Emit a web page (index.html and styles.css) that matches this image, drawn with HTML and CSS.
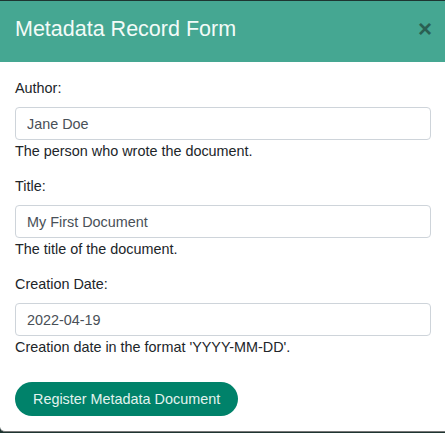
FILE: index.html
```html
<!DOCTYPE html>
<html>
<head>
<meta charset="utf-8">
<link rel="stylesheet" href="styles.css">
</head>
<body>
<div class="modal">
  <div class="modal-header">
    <h4 class="modal-title">Metadata Record Form</h4>
    <span class="close">&times;</span>
  </div>
  <form class="modal-body">
    <div class="field">
      <label class="label">Author:</label>
      <input class="input" type="text" value="Jane Doe">
      <div class="help">The person who wrote the document.</div>
    </div>
    <div class="field">
      <label class="label">Title:</label>
      <input class="input" type="text" value="My First Document">
      <div class="help">The title of the document.</div>
    </div>
    <div class="field">
      <label class="label">Creation Date:</label>
      <input class="input" type="text" value="2022-04-19">
      <div class="help">Creation date in the format 'YYYY-MM-DD'.</div>
    </div>
    <button class="btn" type="button">Register Metadata Document</button>
  </form>
</div>
</body>
</html>
```
FILE: styles.css
```css
html, body {
  margin: 0;
  padding: 0;
  background: #1e3531;
  font-family: "Liberation Sans", Arial, sans-serif;
  color: #212529;
}
.modal {
  margin-top: 1px;
  width: 450px;
  height: 431px;
  box-sizing: border-box;
  background: #fff;
  border-bottom: 1px solid #777;
  border-bottom-left-radius: 5px;
  overflow: hidden;
}
.modal-header {
  height: 61px;
  background: #45a792;
  display: flex;
  align-items: center;
  justify-content: space-between;
  padding: 0 13px 0 15px;
  box-sizing: border-box;
  width: 445px;
}
.modal-title {
  margin: -4px 0 0 0;
  font-weight: normal;
  font-size: 21.5px;
  color: #f3fbf8;
  line-height: 1;
}
.close {
  font-size: 24px;
  font-weight: bold;
  color: #2a6052;
  line-height: 1;
  margin-top: -5px;
}
.modal-body {
  padding: 16px 14px 15px 15px;
  width: 445px;
  box-sizing: border-box;
  display: flex;
  flex-direction: column;
  align-items: flex-start;
}
.field {
  width: 100%;
  display: flex;
  flex-direction: column;
  margin-bottom: 15px;
}
.label {
  font-size: 14.4px;
  line-height: 20px;
  margin-bottom: 9px;
}
.input {
  height: 33px;
  box-sizing: border-box;
  border: 1px solid #ced4da;
  border-radius: 4px;
  padding: 0 11px;
  font-family: inherit;
  font-size: 14.4px;
  color: #495057;
  margin: 0;
}
.help {
  font-size: 14.4px;
  line-height: 20px;
  margin-top: 1px;
}
.btn {
  margin-top: 10px;
  height: 34px;
  padding: 0 18px;
  border: none;
  border-radius: 17px;
  background: #00826a;
  color: #e3f3ef;
  font-family: inherit;
  font-size: 14.4px;
}
```
